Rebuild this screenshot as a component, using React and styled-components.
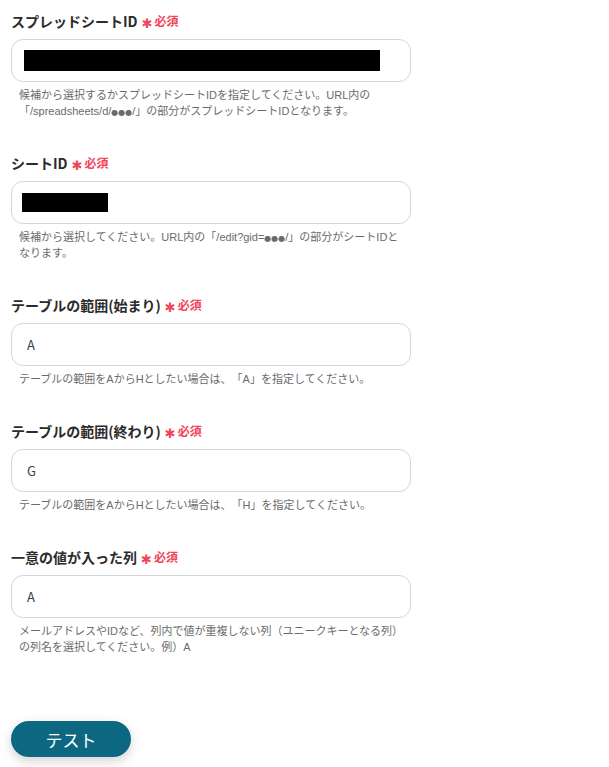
import styled, { createGlobalStyle } from "styled-components";

const GlobalStyle = createGlobalStyle`
  * {
    margin: 0;
    padding: 0;
    box-sizing: border-box;
  }
  body {
    background: #fff;
    font-family: "Liberation Sans", "Noto Sans CJK JP", sans-serif;
    text-spacing-trim: space-all;
  }
`;

const Page = styled.div`
  width: 609px;
  min-height: 767px;
  padding: 10px 0 0 11px;
  display: flex;
  flex-direction: column;
`;

const Field = styled.div`
  width: 400px;
  display: flex;
  flex-direction: column;
  margin-bottom: 33px;
`;

const Label = styled.div`
  font-family: "Noto Sans CJK JP", sans-serif;
  font-size: 14px;
  font-weight: 700;
  height: 22px;
  line-height: 22px;
  color: #2b2b2b;
  margin-bottom: 7px;
  display: flex;
  align-items: center;
`;

const Required = styled.span`
  color: #f0445a;
  font-size: 12px;
  font-weight: 700;
  margin-left: 4px;
  display: flex;
  align-items: center;
  gap: 2px;
`;

const Star = styled.span`
  font-family: "DejaVu Sans", sans-serif;
  font-size: 13px;
  line-height: 1;
  margin-top: 4px;
`;

const Input = styled.div`
  height: 43px;
  border: 1px solid #d3d6dd;
  border-radius: 12px;
  background: #fff;
  display: flex;
  align-items: center;
  padding-left: ${(p) => p.$pad || 15}px;
  font-family: "Noto Sans CJK JP", sans-serif;
  font-size: 13px;
  color: #3a3f4a;
`;

const Redacted = styled.span`
  display: block;
  background: #000;
  width: ${(p) => p.$w}px;
  height: ${(p) => p.$h}px;
`;

const Help = styled.p`
  margin-top: 5px;
  padding: 0 6px 0 8px;
  font-size: 11px;
  line-height: 16px;
  color: #6b6b6b;
`;

const Dots = styled.span`
  font-family: "DejaVu Sans", sans-serif;
  font-size: 8px;
  line-height: 1;
`;

const Button = styled.button`
  margin-top: 33px;
  width: 120px;
  height: 36px;
  border: none;
  border-radius: 18px;
  background: #0b6880;
  color: #fff;
  font-family: "Noto Sans CJK JP", sans-serif;
  font-size: 17px;
  box-shadow: 0 4px 12px rgba(0, 0, 0, 0.18);
  cursor: pointer;
`;

const fields = [
  {
    label: "スプレッドシートID",
    value: <Redacted $w={356} $h={21} />,
    pad: 12,
    help: (
      <>
        候補から選択するかスプレッドシートIDを指定してください。URL内の「/spreadsheets/d/<Dots>●●●</Dots>/」の部分がスプレッドシートIDとなります。
      </>
    ),
  },
  {
    label: "シートID",
    value: <Redacted $w={86} $h={19} />,
    pad: 10,
    help: (
      <>
        候補から選択してください。URL内の「/edit?gid=<Dots>●●●</Dots>/」の部分がシートIDとなります。
      </>
    ),
  },
  {
    label: "テーブルの範囲(始まり)",
    value: "A",
    help: "テーブルの範囲をAからHとしたい場合は、「A」を指定してください。",
  },
  {
    label: "テーブルの範囲(終わり)",
    value: "G",
    help: "テーブルの範囲をAからHとしたい場合は、「H」を指定してください。",
  },
  {
    label: "一意の値が入った列",
    value: "A",
    help: "メールアドレスやIDなど、列内で値が重複しない列（ユニークキーとなる列）の列名を選択してください。例）A",
  },
];

export default function App() {
  return (
    <>
      <GlobalStyle />
      <Page>
        {fields.map((f) => (
          <Field key={f.label}>
            <Label>
              {f.label}
              <Required>
                <Star>✱</Star>必須
              </Required>
            </Label>
            <Input $pad={f.pad}>{f.value}</Input>
            <Help>{f.help}</Help>
          </Field>
        ))}
        <Button>テスト</Button>
      </Page>
    </>
  );
}
